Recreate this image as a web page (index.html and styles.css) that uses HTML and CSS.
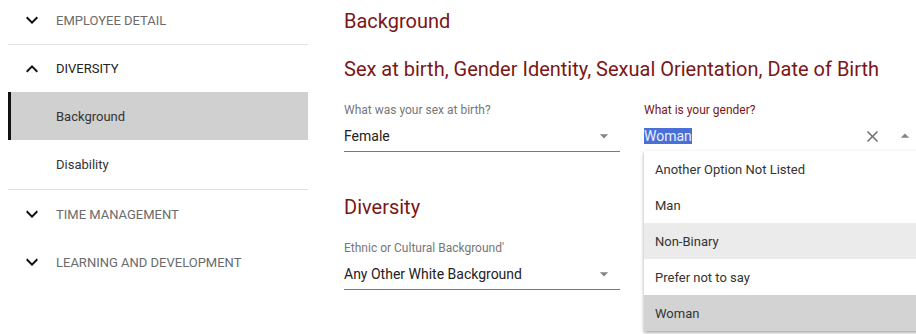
FILE: index.html
```html
<!DOCTYPE html>
<html>
<head>
<meta charset="utf-8">
<link rel="stylesheet" href="styles.css">
</head>
<body>
<div class="page">
  <nav class="sidebar">
    <div class="group">
      <div class="head collapsed">
        <svg class="chev" viewBox="0 0 24 24"><path d="M16.59 8.59L12 13.17 7.41 8.59 6 10l6 6 6-6z"/></svg>
        <span>EMPLOYEE DETAIL</span>
      </div>
    </div>
    <div class="group">
      <div class="head open">
        <svg class="chev" viewBox="0 0 24 24"><path d="M12 8l-6 6 1.41 1.41L12 10.83l4.59 4.58L18 14z"/></svg>
        <span>DIVERSITY</span>
      </div>
      <div class="sub active">Background</div>
      <div class="sub end">Disability</div>
    </div>
    <div class="group last">
      <div class="head collapsed">
        <svg class="chev" viewBox="0 0 24 24"><path d="M16.59 8.59L12 13.17 7.41 8.59 6 10l6 6 6-6z"/></svg>
        <span>TIME MANAGEMENT</span>
      </div>
      <div class="head collapsed">
        <svg class="chev" viewBox="0 0 24 24"><path d="M16.59 8.59L12 13.17 7.41 8.59 6 10l6 6 6-6z"/></svg>
        <span>LEARNING AND DEVELOPMENT</span>
      </div>
    </div>
  </nav>
  <main class="main">
    <h1 class="title">Background</h1>
    <h2 class="section">Sex at birth, Gender Identity, Sexual Orientation, Date of Birth</h2>
    <div class="row first">
      <div class="field">
        <div class="label">What was your sex at birth?</div>
        <div class="control">
          <span class="value">Female</span>
          <svg class="arrow" viewBox="0 0 24 24"><path d="M7 10l5 5 5-5z"/></svg>
        </div>
      </div>
      <div class="field focused">
        <div class="label">What is your gender?</div>
        <div class="control">
          <span class="value"><span class="sel">Woman</span></span>
          <svg class="clear" viewBox="0 0 24 24"><path d="M19 6.41L17.59 5 12 10.59 6.41 5 5 6.41 10.59 12 5 17.59 6.41 19 12 13.41 17.59 19 19 17.59 13.41 12z"/></svg>
          <svg class="arrow up" viewBox="0 0 24 24"><path d="M7 14l5-5 5 5z"/></svg>
        </div>
        <ul class="menu">
          <li>Another Option Not Listed</li>
          <li>Man</li>
          <li class="hover">Non-Binary</li>
          <li>Prefer not to say</li>
          <li class="chosen">Woman</li>
        </ul>
      </div>
    </div>
    <h2 class="section div">Diversity</h2>
    <div class="row second">
      <div class="field">
        <div class="label">Ethnic or Cultural Background'</div>
        <div class="control">
          <span class="value">Any Other White Background</span>
          <svg class="arrow" viewBox="0 0 24 24"><path d="M7 10l5 5 5-5z"/></svg>
        </div>
      </div>
    </div>
  </main>
</div>
</body>
</html>
```

FILE: styles.css
```css
html, body {
  margin: 0;
  padding: 0;
  background: #fff;
  overflow: hidden;
}
body {
  font-family: Roboto, "Liberation Sans", sans-serif;
  width: 916px;
  height: 334px;
}
.page {
  display: flex;
  align-items: flex-start;
}
.sidebar {
  width: 300px;
  margin-left: 8px;
  margin-top: -4px;
  flex: none;
}
.group {
  border-bottom: 1px solid #e0e0e0;
}
.group.last {
  border-bottom: none;
}
.head {
  height: 48px;
  display: flex;
  align-items: center;
  font-size: 13px;
  color: #6b6b6b;
}
.head.open {
  height: 47px;
  color: #222;
}
.chev {
  width: 24px;
  height: 24px;
  margin-left: 12px;
  margin-right: 12px;
  fill: #111;
}
.sub {
  height: 48px;
  display: flex;
  align-items: center;
  padding-left: 48px;
  font-size: 13px;
  color: #333;
  box-sizing: border-box;
}
.sub.end {
  height: 49px;
}
.sub.active {
  background: #d0d0d0;
  border-left: 3px solid #111;
  padding-left: 45px;
}
.main {
  margin-left: 36px;
  flex: 1;
}
.title, .section {
  font-weight: 400;
  color: #7a1717;
  font-size: 20px;
  line-height: 24px;
  margin: 0;
}
.title {
  margin-top: 9px;
}
.section {
  margin-top: 24px;
}
.section.div {
  margin-top: 43px;
}
.row {
  display: flex;
  gap: 24px;
}
.row.first {
  margin-top: 22px;
}
.row.second {
  margin-top: 22px;
}
.field {
  width: 276px;
  flex: none;
  position: relative;
}
.label {
  font-size: 12px;
  line-height: 14px;
  color: #777;
}
.field.focused .label {
  color: #7a1717;
}
.control {
  display: flex;
  align-items: center;
  height: 29px;
  border-bottom: 1px solid #7a7a7a;
  box-sizing: border-box;
  margin-top: 6px;
}
.field.focused .control {
  border-bottom: 1px solid #7a1717;
}
.value {
  flex: 1;
  font-size: 14px;
  color: #222;
  line-height: 18px;
  padding-top: 1px;
  padding-bottom: 3px;
}
.sel {
  background: #4a6fd6;
  color: #e8eeff;
}
.arrow {
  width: 20px;
  height: 20px;
  fill: #858585;
  margin-right: 6px;
  margin-bottom: 2px;
}
.arrow.up {
  margin-right: 5px;
}
.clear {
  width: 19px;
  height: 19px;
  fill: #707070;
  margin-right: 13px;
  margin-bottom: 2px;
}
.menu {
  position: absolute;
  left: 0;
  top: 48px;
  width: 276px;
  margin: 0;
  padding: 0;
  list-style: none;
  background: #fff;
  box-shadow: 0 2px 4px rgba(0,0,0,0.25), 0 1px 2px rgba(0,0,0,0.15);
}
.menu li {
  height: 36px;
  display: flex;
  align-items: center;
  padding-left: 11px;
  font-size: 13px;
  color: #333;
}
.menu li.hover {
  background: #ebebeb;
}
.menu li.chosen {
  background: #d3d3d3;
}
```
